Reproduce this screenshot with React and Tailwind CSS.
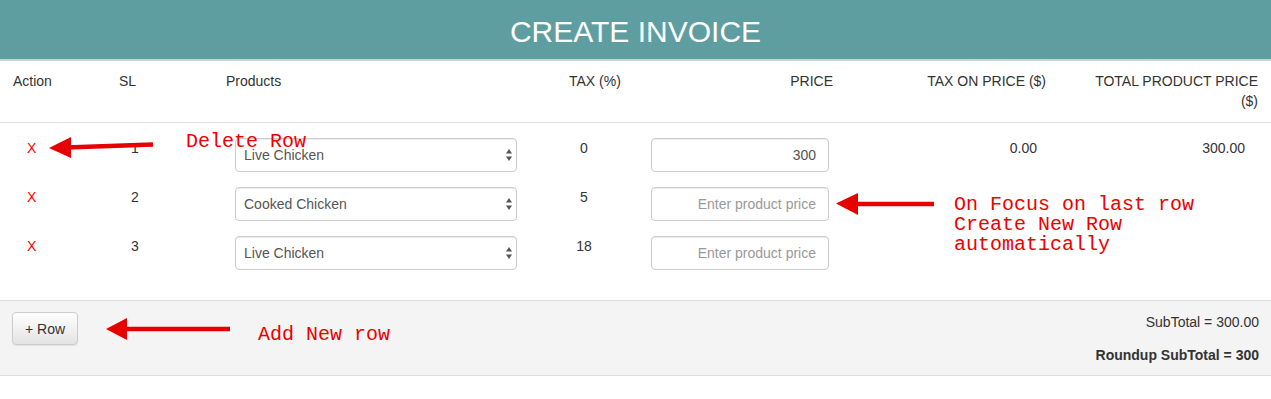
export default function App() {
  const rows = [
    { sl: 1, product: 'Live Chicken', tax: '0', price: '300', taxOn: '0.00', total: '300.00' },
    { sl: 2, product: 'Cooked Chicken', tax: '5', price: '', taxOn: '', total: '' },
    { sl: 3, product: 'Live Chicken', tax: '18', price: '', taxOn: '', total: '' },
  ];

  return (
    <div className="relative w-[1271px] h-[399px] overflow-hidden bg-white text-[14px] leading-[20px] text-[#333] font-['Liberation_Sans',Arial,sans-serif]">
      {/* Title bar */}
      <div className="h-[61px] pt-[4px] bg-[#5f9ea0] border-b-2 border-[#d0d0d0] flex items-center justify-center text-white text-[30px] leading-none">
        CREATE INVOICE
      </div>

      {/* Table head */}
      <div className="h-[62px] flex border-b border-[#dddddd] pt-[10px]">
        <div className="w-[100px] pl-[13px]">Action</div>
        <div className="w-[115px] pl-[19px]">SL</div>
        <div className="w-[325px] pl-[11px]">Products</div>
        <div className="w-[100px] pl-[29px]">TAX (%)</div>
        <div className="w-[200px] pr-[7px] text-right">PRICE</div>
        <div className="w-[215px] pr-[9px] text-right">TAX ON PRICE ($)</div>
        <div className="w-[216px] pr-[13px] text-right">
          TOTAL PRODUCT PRICE
          <br />
          ($)
        </div>
      </div>

      {/* Table body */}
      <div className="pt-[15px] pb-[15px] flex flex-col">
        {rows.map((r) => (
          <div key={r.sl} className="h-[49px] flex items-start">
            <div className="w-[100px] pl-[27px] text-[#ff0000]">X</div>
            <div className="w-[115px] pl-[31px]">{r.sl}</div>
            <div className="w-[325px] pl-[20px]">
              <div className="relative w-[282px] h-[34px]">
                <select
                  defaultValue={r.product}
                  className="appearance-none w-full h-full bg-white border border-[#cccccc] rounded-[4px] pl-[8px] text-[#555] text-[14px] shadow-[inset_0_1px_1px_rgba(0,0,0,0.075)] outline-none"
                >
                  <option>Live Chicken</option>
                  <option>Cooked Chicken</option>
                </select>
                <svg
                  className="absolute right-[5px] top-[11px] pointer-events-none"
                  width="6"
                  height="13"
                  viewBox="0 0 6 13"
                >
                  <polygon points="3,0 6,4.5 0,4.5" fill="#555" />
                  <polygon points="0,7.5 6,7.5 3,12" fill="#555" />
                </svg>
              </div>
            </div>
            <div className="w-[100px]">
              <div className="w-[88px] text-center">{r.tax}</div>
            </div>
            <div className="w-[200px] pl-[11px]">
              <input
                defaultValue={r.price}
                placeholder="Enter product price"
                className="w-[178px] h-[34px] border border-[#cccccc] rounded-[4px] pr-[12px] text-right text-[#555] text-[14px] placeholder:text-[#999] shadow-[inset_0_1px_1px_rgba(0,0,0,0.075)] outline-none"
              />
            </div>
            <div className="w-[215px] pr-[18px] text-right">{r.taxOn}</div>
            <div className="w-[216px] pr-[26px] text-right">{r.total}</div>
          </div>
        ))}
      </div>

      {/* Footer */}
      <div className="h-[76px] bg-[#f4f4f4] border-t border-b border-[#dddddd] flex justify-between pl-[12px] pr-[12px] pt-[11px]">
        <div>
          <button className="w-[66px] h-[33px] rounded-[4px] border border-[#cccccc] bg-gradient-to-b from-white to-[#e3e3e3] text-[#333] text-[14px] shadow-[0_1px_1px_rgba(0,0,0,0.08)]">
            + Row
          </button>
        </div>
        <div className="flex flex-col items-end">
          <div>SubTotal = 300.00</div>
          <div className="mt-[13px] font-bold">Roundup SubTotal = 300</div>
        </div>
      </div>

      {/* Annotations */}
      <svg className="absolute inset-0 pointer-events-none" width="1271" height="399" viewBox="0 0 1271 399">
        <line x1="153" y1="144.5" x2="66" y2="147.5" stroke="#e60000" strokeWidth="4.5" />
        <polygon points="49,148 71,137 71,158" fill="#e60000" />
        <line x1="934" y1="204" x2="855" y2="204" stroke="#e60000" strokeWidth="4.5" />
        <polygon points="836,203.5 858,193 858,215" fill="#e60000" />
        <line x1="230" y1="329" x2="124" y2="329" stroke="#e60000" strokeWidth="4.5" />
        <polygon points="106,329 127,318 127,340" fill="#e60000" />
      </svg>
      <div className="absolute left-[186px] top-[132px] text-[20px] leading-[20px] text-[#ee0000] font-['Liberation_Mono','Courier_New',monospace] whitespace-pre">
        Delete Row
      </div>
      <div className="absolute left-[954px] top-[195px] text-[20px] leading-[20px] text-[#ee0000] font-['Liberation_Mono','Courier_New',monospace] whitespace-pre">
        {'On Focus on last row\nCreate New Row\nautomatically'}
      </div>
      <div className="absolute left-[258px] top-[325px] text-[20px] leading-[20px] text-[#ee0000] font-['Liberation_Mono','Courier_New',monospace] whitespace-pre">
        Add New row
      </div>
    </div>
  );
}
